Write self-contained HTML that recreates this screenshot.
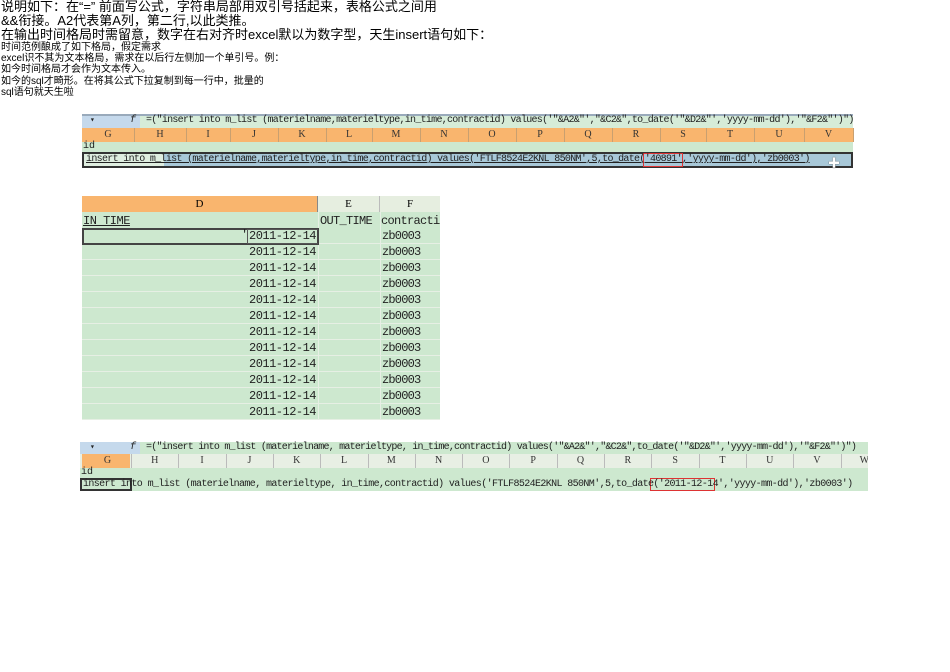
<!DOCTYPE html>
<html><head><meta charset="utf-8"><style>
body{margin:0;width:950px;height:672px;background:#fff;position:relative;overflow:hidden;font-family:"Liberation Sans","Noto Sans CJK SC",sans-serif}
.t{position:absolute;left:1px;white-space:nowrap;color:#000}
.b{font-size:13px;line-height:14px}
.s{font-size:10px;line-height:11px}
.a{position:absolute;box-sizing:border-box}
.m{font-family:"Liberation Mono","Noto Sans CJK SC",monospace;font-size:10px;color:#222;white-space:nowrap}
.hc{position:absolute;top:0;height:100%;border-right:1px solid #c9a070;text-align:center;font-family:"Liberation Serif",serif;font-size:10px;line-height:14px;color:#333}
</style></head><body>
<div class="t b" style="top:0">说明如下：在“=” 前面写公式，字符串局部用双引号括起来，表格公式之间用</div>
<div class="t b" style="top:14px">&amp;&amp;衔接。A2代表第A列，第二行,以此类推。</div>
<div class="t b" style="top:28px">在输出时间格局时需留意，数字在右对齐时excel默以为数字型，天生insert语句如下：</div>
<div class="t s" style="top:42px">时间范例酿成了如下格局，假定需求</div>
<div class="t s" style="top:53px">excel识不其为文本格局，需求在以后行左侧加一个单引号。例：</div>
<div class="t s" style="top:64px">如今时间格局才会作为文本传入。</div>
<div class="t s" style="top:76px">如今的sql才畸形。在将其公式下拉复制到每一行中，批量的</div>
<div class="t s" style="top:87px">sql语句就天生啦</div>

<!-- sheet 1 -->
<div class="a" style="left:82px;top:114px;width:771px;height:54px;background:#cde8cf"></div>
<div class="a" style="left:82px;top:114px;width:771px;height:14px;background:#d6ecd8;border-top:2px solid #9ab"></div>
<div class="a" style="left:82px;top:116px;width:58px;height:12px;background:#c5d9ec"></div>
<div class="a m" style="left:90px;top:115px;font-size:8px">▾</div>
<div class="a m" style="left:130px;top:115px;font-style:italic">f</div>
<div class="a m" style="left:146px;top:115px;letter-spacing:-0.72px">=("insert into m_list (materielname,materieltype,in_time,contractid) values('"&amp;A2&amp;"',"&amp;C2&amp;",to_date('"&amp;D2&amp;"','yyyy-mm-dd'),'"&amp;F2&amp;"')")</div>
<div class="a" style="left:82px;top:128px;width:771px;height:14px;background:#f9b56e" id="h1"></div>
<div class="a m" style="left:83px;top:141px">id</div>
<div class="a" style="left:82px;top:152px;width:771px;height:16px;background:#a8c8d8;border:2px solid #333"></div>
<div class="a" style="left:84px;top:154px;width:80px;height:12px;background:#dfeee0"></div>
<div class="a" style="left:643px;top:153px;width:40px;height:14px;border:1px solid #d33"></div>
<div class="a m" style="left:86px;top:154px;text-decoration:underline;letter-spacing:-0.68px">insert into m_list (materielname,materieltype,in_time,contractid) values('FTLF8524E2KNL 850NM',5,to_date('40891','yyyy-mm-dd'),'zb0003')</div>
<div class="a" style="left:828px;top:154px;color:#fff;font-size:12px;font-weight:bold;text-shadow:0 0 1px #000">✚</div>

<!-- sheet 2 -->
<div class="a" style="left:82px;top:196px;width:358px;height:224px;background:#cde8cf"></div>
<div class="a" style="left:82px;top:196px;width:236px;height:16px;background:#f9b56e;border-right:1px solid #888;text-align:center;font-family:'Liberation Serif',serif;font-size:11px;line-height:16px">D</div>
<div class="a" style="left:318px;top:196px;width:62px;height:16px;background:#e6eee0;border-right:1px solid #bbb;text-align:center;font-family:'Liberation Serif',serif;font-size:11px;line-height:16px">E</div>
<div class="a" style="left:380px;top:196px;width:60px;height:16px;background:#e6eee0;text-align:center;font-family:'Liberation Serif',serif;font-size:11px;line-height:16px">F</div>
<div class="a m" style="left:83px;top:214px;font-size:12px;text-decoration:underline;letter-spacing:-0.5px">IN TIME</div>
<div class="a m" style="left:320px;top:214px;font-size:12px;letter-spacing:-0.7px">OUT_TIME</div>
<div class="a m" style="left:381px;top:214px;font-size:12px;letter-spacing:-0.7px">contracti</div>
<div id="rows"></div>
<div class="a" style="left:82px;top:228px;width:237px;height:17px;border:2px solid #444"></div>
<div class="a" style="left:247px;top:229px;width:71px;height:15px;border:1px solid #555;border-right:none"></div>
<div class="a m" style="left:241px;top:228px;font-size:12px">'</div>

<!-- sheet 3 -->
<div class="a" style="left:80px;top:442px;width:788px;height:49px;background:#cde8cf"></div>
<div class="a" style="left:80px;top:442px;width:60px;height:12px;background:#c5d9ec"></div>
<div class="a m" style="left:90px;top:442px;font-size:8px">▾</div>
<div class="a m" style="left:130px;top:442px;font-style:italic">f</div>
<div class="a m" style="left:146px;top:442px;letter-spacing:-0.78px">=("insert into m_list (materielname, materieltype, in_time,contractid) values('"&amp;A2&amp;"',"&amp;C2&amp;",to_date('"&amp;D2&amp;"','yyyy-mm-dd'),'"&amp;F2&amp;"')")</div>
<div class="a" style="left:80px;top:454px;width:788px;height:14px;background:#e8efe4;overflow:hidden" id="h3"><div style="position:absolute;left:2px;top:0;width:48px;height:14px;background:#f9b56e"></div></div>
<div class="a m" style="left:81px;top:467px">id</div>
<div class="a" style="left:80px;top:478px;width:52px;height:13px;border:2px solid #333"></div>
<div class="a" style="left:650px;top:478px;width:65px;height:13px;border:1px solid #d33"></div>
<div class="a m" style="left:83px;top:479px;letter-spacing:-0.62px">insert into m_list (materielname, materieltype, in_time,contractid) values('FTLF8524E2KNL 850NM',5,to_date('2011-12-14','yyyy-mm-dd'),'zb0003')</div>

<script>
var L1="GHIJKLMNOPQRSTUV".split(""),x1=[82,134,186,230,278,326,372,420,468,516,564,612,660,706,754,804,853];
var h=document.getElementById('h1');
for(var i=0;i<16;i++){var d=document.createElement('div');d.className='hc';d.style.left=(x1[i]-82)+'px';d.style.width=(x1[i+1]-x1[i])+'px';d.textContent=L1[i];h.appendChild(d);}
var L3="GHIJKLMNOPQRSTUVW".split(""),h3=document.getElementById('h3');
for(var i=0;i<17;i++){var x=84+i*47.3;var d=document.createElement('div');d.className='hc';d.style.borderColor='#bbb';d.style.left=(x-80)+'px';d.style.width='47px';d.textContent=L3[i];h3.appendChild(d);}
var r=document.getElementById('rows'),s='';
for(var i=0;i<12;i++){var y=228+i*16;
s+='<div class="a" style="left:82px;top:'+(y+15)+'px;width:358px;height:1px;background:#e6efe4"></div>';
s+='<div class="a m" style="left:249px;top:'+(y+1)+'px;font-size:12px;letter-spacing:-0.5px">2011-12-14</div>';
s+='<div class="a m" style="left:382px;top:'+(y+1)+'px;font-size:12px;letter-spacing:-0.8px">zb0003</div>';}
s+='<div class="a" style="left:318px;top:212px;width:1px;height:208px;background:#e6efe4"></div><div class="a" style="left:380px;top:212px;width:1px;height:208px;background:#e6efe4"></div>';
r.innerHTML=s;
</script>
</body></html>
